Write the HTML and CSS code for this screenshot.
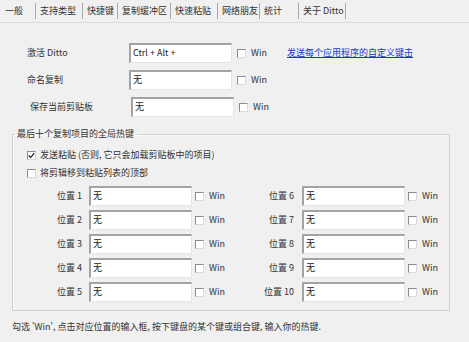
FILE: index.html
```html
<!DOCTYPE html>
<html lang="zh-CN">
<head>
  <meta charset="UTF-8">
  <title>Ditto 选项 - 快捷键</title>
  <link rel="stylesheet" href="styles.css">
</head>
<body>
  <div class="tabs">
    <span class="tab">一般</span>
    <span class="tab">支持类型</span>
    <span class="tab active">快捷键</span>
    <span class="tab">复制缓冲区</span>
    <span class="tab">快速粘贴</span>
    <span class="tab">网络朋友</span>
    <span class="tab">统计</span>
    <span class="tab">关于 Ditto</span>
  </div>

  <div class="main-keys">
    <span class="lbl">激活 Ditto</span>
    <span class="box">Ctrl + Alt +</span>
    <span class="win"><i class="cb"></i>Win</span>
    <a class="link" href="#">发送每个应用程序的自定义键击</a>

    <span class="lbl">命名复制</span>
    <span class="box">无</span>
    <span class="win"><i class="cb"></i>Win</span>
    <span></span>

    <span class="lbl lbl-shift">保存当前剪贴板</span>
    <span class="box box-shift">无</span>
    <span class="win win-shift"><i class="cb"></i>Win</span>
    <span></span>
  </div>

  <fieldset class="group">
    <legend>最后十个复制项目的全局热键</legend>
    <div class="check-row"><i class="cb"><svg viewBox="0 0 9 9" width="7" height="7"><polyline points="1,4.5 3.5,7 8,1.5" fill="none" stroke="#222" stroke-width="1.6"/></svg></i>发送粘贴 (否则, 它只会加载剪贴板中的项目)</div>
    <div class="check-row"><i class="cb"></i>将剪辑移到粘贴列表的顶部</div>

    <div class="slots">
      <span class="slot-lbl">位置 1</span><span class="box">无</span><span class="win"><i class="cb"></i>Win</span>
      <span class="slot-lbl right">位置 6</span><span class="box">无</span><span class="win"><i class="cb"></i>Win</span>

      <span class="slot-lbl">位置 2</span><span class="box">无</span><span class="win"><i class="cb"></i>Win</span>
      <span class="slot-lbl right">位置 7</span><span class="box">无</span><span class="win"><i class="cb"></i>Win</span>

      <span class="slot-lbl">位置 3</span><span class="box">无</span><span class="win"><i class="cb"></i>Win</span>
      <span class="slot-lbl right">位置 8</span><span class="box">无</span><span class="win"><i class="cb"></i>Win</span>

      <span class="slot-lbl">位置 4</span><span class="box">无</span><span class="win"><i class="cb"></i>Win</span>
      <span class="slot-lbl right">位置 9</span><span class="box">无</span><span class="win"><i class="cb"></i>Win</span>

      <span class="slot-lbl">位置 5</span><span class="box">无</span><span class="win"><i class="cb"></i>Win</span>
      <span class="slot-lbl right">位置 10</span><span class="box">无</span><span class="win"><i class="cb"></i>Win</span>
    </div>
  </fieldset>

  <p class="hint">勾选 'Win', 点击对应位置的输入框, 按下键盘的某个键或组合键, 输入你的热键.</p>
</body>
</html>
```

FILE: styles.css
```css
body {
  margin: 0;
  width: 469px;
  height: 342px;
  overflow: hidden;
  background: #f0f0f0;
  color: #333;
  font-family: "Noto Sans CJK SC", "Noto Sans", sans-serif;
  font-size: 9px;
  line-height: 12px;
}

/* tab strip */
.tabs {
  display: grid;
  grid-template-columns: 36px 47px 35px 53px 47px 42px 39px 47px;
  height: 22px;
  border-bottom: 1px solid #dcdcdc;
  align-items: center;
}
.tab {
  height: 16px;
  line-height: 16px;
  padding-left: 4px;
  border-right: 1px solid #a9a9a9;
  white-space: nowrap;
}
.tab:first-child {
  padding-left: 5px;
}

/* shared bits */
.box {
  box-sizing: border-box;
  width: 103px;
  height: 20px;
  padding: 2px 0 0 2px;
  background: #fff;
  border-top: 2px solid #a3a3a3;
  border-left: 2px solid #a3a3a3;
  border-right: 1px solid #e4e4e4;
  border-bottom: 1px solid #e4e4e4;
  color: #1a1a1a;
  white-space: nowrap;
}
.cb {
  display: inline-flex;
  align-items: center;
  justify-content: center;
  box-sizing: border-box;
  width: 9px;
  height: 9px;
  margin-right: 5px;
  background: #fff;
  border: 1px solid;
  border-color: #8c8c8c #dadada #dadada #8c8c8c;
}
.win {
  display: flex;
  align-items: center;
  margin-left: 5px;
}

/* hot keys at the top */
.main-keys {
  display: grid;
  grid-template-columns: 102px 103px 46px auto;
  row-gap: 7px;
  align-items: center;
  margin-top: 20px;
  padding-left: 27px;
}
.lbl-shift {
  padding-left: 3px;
}
.box-shift {
  margin-left: 2px;
}
.win-shift {
  margin-left: 7px;
}
.link {
  margin-left: 9px;
  color: #1638c8;
  text-decoration: underline;
}

/* group box */
.group {
  margin: 11px 0 0 12px;
  width: 438px;
  box-sizing: border-box;
  padding: 6px 0 8px 14px;
  border: 1px solid #cfcfcf;
  box-shadow: inset 1px 1px 0 #fbfbfb;
}
.group legend {
  margin-left: -12px;
  padding: 0 3px 0 2px;
  line-height: 12px;
}
.check-row {
  display: flex;
  align-items: center;
  height: 18px;
}
.check-row .cb {
  margin-right: 4px;
}

.slots {
  display: grid;
  grid-template-columns: 62px 103px 54px 56px 103px auto;
  row-gap: 4px;
  align-items: center;
  margin-top: 4px;
}
.slot-lbl {
  text-align: right;
  padding-right: 7px;
}
.slot-lbl.right {
  padding-right: 8px;
}
.slots .win {
  margin-left: 3px;
}

.hint {
  margin: 9px 0 0 12px;
  line-height: 14px;
}
```
